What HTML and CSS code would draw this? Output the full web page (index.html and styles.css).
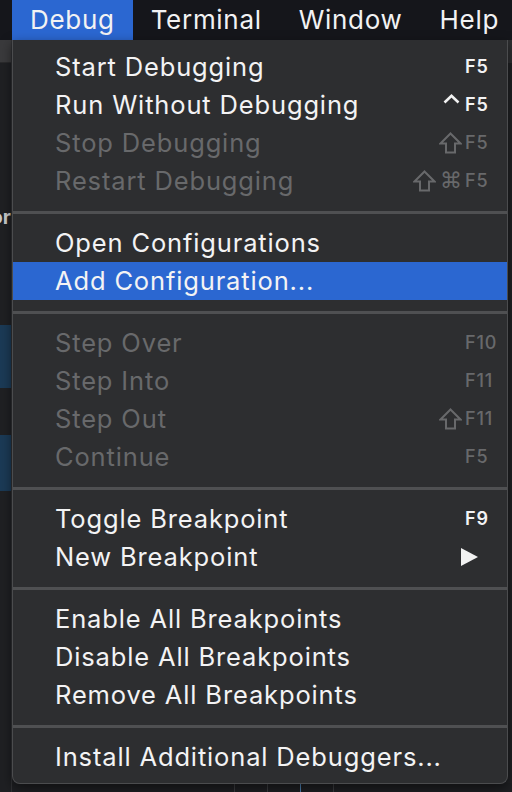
FILE: index.html
```html
<!DOCTYPE html>
<html>
<head>
<meta charset="utf-8">
<link rel="stylesheet" href="styles.css">
</head>
<body>
<div class="screen">
  <div class="menubar">
    <div class="mb-item active">Debug</div>
    <div class="mb-item">Terminal</div>
    <div class="mb-item">Window</div>
    <div class="mb-item">Help</div>
  </div>
  <div class="workspace">
    <div class="side">
      <div class="side-tab"></div>
      <div class="side-gap1"></div>
      <div class="side-label"><span>Explor</span></div>
      <div class="side-gap2"></div>
      <div class="side-sel s1"></div>
      <div class="side-gap3"></div>
      <div class="side-sel s2"></div>
    </div>
    <div class="main">
      <div class="main-tab"></div>
      <div class="main-body"></div>
      <div class="status">
        <span class="vl"></span><span class="vl"></span><span class="vl blue"></span><span class="vl"></span>
      </div>
    </div>

    <div class="menu">
      <div class="row"><span class="label">Start Debugging</span><span class="mods"></span><span class="key">F5</span></div>
      <div class="row"><span class="label">Run Without Debugging</span><span class="mods"><svg class="ctrl" width="17" height="10" viewBox="0 0 17 10"><path d="M1.5 8.5 L8.5 1.8 L15.5 8.5" fill="none" stroke="#f2f2f2" stroke-width="2.6"/></svg></span><span class="key">F5</span></div>
      <div class="row dis"><span class="label">Stop Debugging</span><span class="mods"><svg width="23" height="22" viewBox="0 0 23 22"><path d="M11.5 1.5 L21.5 11.5 L16 11.5 L16 20.5 L7 20.5 L7 11.5 L1.5 11.5 Z" fill="none" stroke="#68696b" stroke-width="2" stroke-linejoin="miter"/></svg></span><span class="key">F5</span></div>
      <div class="row dis"><span class="label">Restart Debugging</span><span class="mods"><svg width="23" height="22" viewBox="0 0 23 22"><path d="M11.5 1.5 L21.5 11.5 L16 11.5 L16 20.5 L7 20.5 L7 11.5 L1.5 11.5 Z" fill="none" stroke="#68696b" stroke-width="2" stroke-linejoin="miter"/></svg><span class="cmd">⌘</span></span><span class="key">F5</span></div>
      <div class="sep"></div>
      <div class="row"><span class="label">Open Configurations</span><span class="mods"></span><span class="key"></span></div>
      <div class="row hl"><span class="label">Add Configuration...</span><span class="mods"></span><span class="key"></span></div>
      <div class="sep"></div>
      <div class="row dis"><span class="label">Step Over</span><span class="mods"></span><span class="key">F10</span></div>
      <div class="row dis"><span class="label">Step Into</span><span class="mods"></span><span class="key">F11</span></div>
      <div class="row dis"><span class="label">Step Out</span><span class="mods"><svg width="23" height="22" viewBox="0 0 23 22"><path d="M11.5 1.5 L21.5 11.5 L16 11.5 L16 20.5 L7 20.5 L7 11.5 L1.5 11.5 Z" fill="none" stroke="#68696b" stroke-width="2" stroke-linejoin="miter"/></svg></span><span class="key">F11</span></div>
      <div class="row dis"><span class="label">Continue</span><span class="mods"></span><span class="key">F5</span></div>
      <div class="sep"></div>
      <div class="row"><span class="label">Toggle Breakpoint</span><span class="mods"></span><span class="key">F9</span></div>
      <div class="row"><span class="label">New Breakpoint</span><span class="mods"></span><span class="key"><svg class="tri" width="18" height="18" viewBox="0 0 18 18"><path d="M0 0 L17 9 L0 18 Z" fill="#f2f2f2"/></svg></span></div>
      <div class="sep"></div>
      <div class="row"><span class="label">Enable All Breakpoints</span><span class="mods"></span><span class="key"></span></div>
      <div class="row"><span class="label">Disable All Breakpoints</span><span class="mods"></span><span class="key"></span></div>
      <div class="row"><span class="label">Remove All Breakpoints</span><span class="mods"></span><span class="key"></span></div>
      <div class="sep"></div>
      <div class="row"><span class="label">Install Additional Debuggers...</span><span class="mods"></span><span class="key"></span></div>
    </div>
  </div>
</div>
</body>
</html>
```

FILE: styles.css
```css
* { box-sizing: border-box; }
html, body { margin: 0; padding: 0; }
body {
  width: 512px;
  height: 792px;
  overflow: hidden;
  background: #1f2023;
  font-family: Inter, "Noto Sans", "Liberation Sans", sans-serif;
}
.screen { display: flex; flex-direction: column; height: 792px; }

.menubar {
  height: 40px;
  background: #15161b;
  display: flex;
  padding-left: 12px;
  flex-shrink: 0;
}
.mb-item {
  padding: 0 19px 0 18px;
  font-size: 26px;
  line-height: 40px;
  color: #f2f2f3;
  letter-spacing: 0.7px;
}
.mb-item.active { background: #2b67d1; padding-right: 18px; }

.workspace { flex: 1; display: flex; position: relative; }
.side {
  width: 12px;
  display: flex;
  flex-direction: column;
  background: #1f2023;
  border-right: 1px solid #303134;
  overflow: hidden;
}
.side-tab { height: 23px; background: #3a3a3c; border-bottom: 1px solid #2a2a2c; }
.side-gap1 { height: 142px; }
.side-label {
  height: 24px;
  display: flex;
  justify-content: flex-end;
  font-size: 20px;
  font-weight: 700;
  line-height: 24px;
  color: #c9cacc;
  padding-right: 0;
}
.side-label span { flex-shrink: 0; }
.side-gap2 { height: 96px; }
.side-sel { background: #1b3a56; }
.s1 { height: 63px; }
.side-gap3 { height: 47px; }
.s2 { height: 56px; }

.main { flex: 1; display: flex; flex-direction: column; }
.main-tab { height: 23px; background: #2e2f31; }
.main-body { flex: 1; background: #202124; }
.status {
  height: 9px;
  background: #1e1f22;
  display: flex;
  padding-left: 222px;
  gap: 32px;
}
.vl { width: 1px; height: 9px; background: #3b3c3f; }
.vl.blue { background: #4c7fb0; }

.menu {
  position: absolute;
  left: 12px;
  top: 0;
  width: 496px;
  background: #2d2e30;
  border: 1px solid #4b4c4e;
  border-top: none;
  border-radius: 0 0 8px 8px;
  padding: 8px 0 7px;
  box-shadow: 0 4px 12px rgba(0,0,0,0.5);
}
.row {
  height: 38px;
  display: flex;
  align-items: center;
  padding-left: 42px;
  color: #f3f3f4;
}
.label {
  flex: 1;
  font-size: 25.5px;
  line-height: 38px;
  letter-spacing: 0.85px;
  white-space: nowrap;
}
.mods {
  display: flex;
  align-items: center;
  justify-content: flex-end;
  gap: 4px;
  padding-right: 3px;
  height: 38px;
}
.ctrl { align-self: flex-start; margin-top: 8px; margin-right: 2px; }
.cmd { font-family: "DejaVu Sans", sans-serif; font-size: 22px; color: #68696b; line-height: 22px; }
.key {
  width: 42px;
  font-size: 18px;
  font-weight: 600;
  letter-spacing: 0.8px;
  line-height: 38px;
  display: flex;
  align-items: center;
}
.tri { margin-left: -4px; }
.row.dis { color: #68696b; }
.row.dis .key { font-weight: 500; }
.row.hl { background: #2b67d1; }
.sep {
  height: 24px;
  display: flex;
  align-items: center;
}
.sep::before {
  content: "";
  display: block;
  width: 100%;
  height: 3px;
  background: #4f5052;
}
```
